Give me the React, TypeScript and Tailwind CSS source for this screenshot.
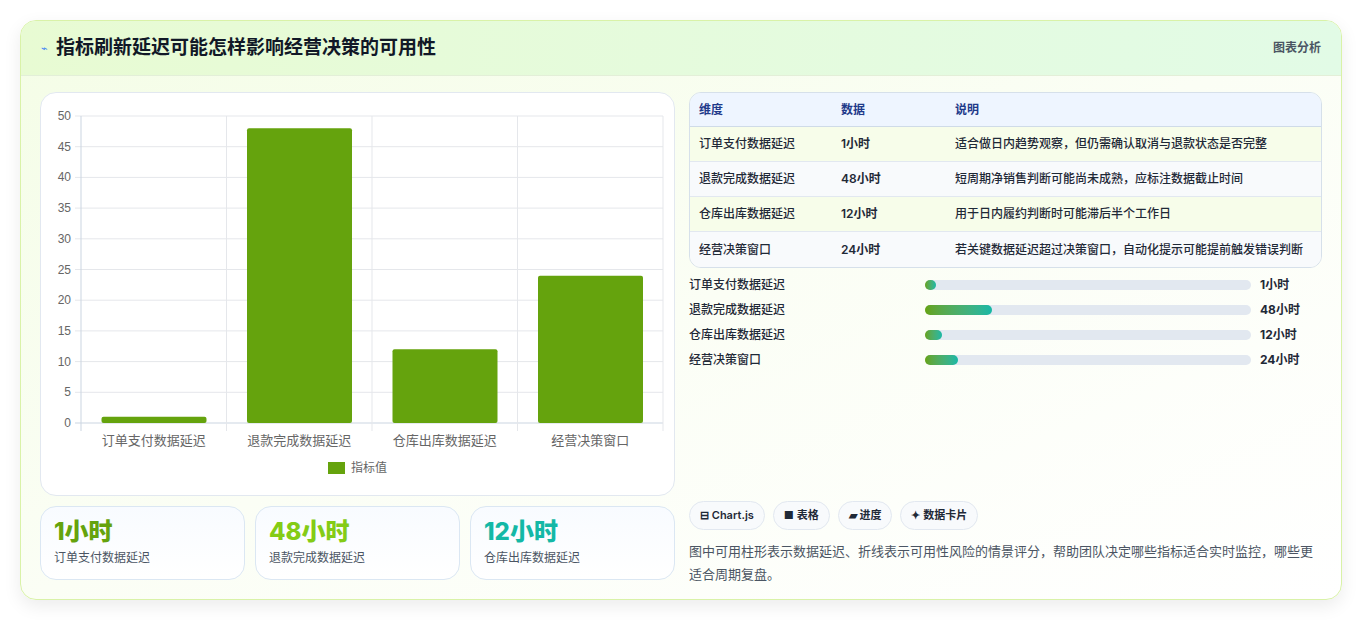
import React from "react";

const cats = ["订单支付数据延迟", "退款完成数据延迟", "仓库出库数据延迟", "经营决策窗口"];
const vals = [1, 48, 12, 24];
const rows = [
  ["订单支付数据延迟", "1小时", "适合做日内趋势观察，但仍需确认取消与退款状态是否完整"],
  ["退款完成数据延迟", "48小时", "短周期净销售判断可能尚未成熟，应标注数据截止时间"],
  ["仓库出库数据延迟", "12小时", "用于日内履约判断时可能滞后半个工作日"],
  ["经营决策窗口", "24小时", "若关键数据延迟超过决策窗口，自动化提示可能提前触发错误判断"],
];

function Chart() {
  const x0 = 40, x1 = 622, yTop = 23, yBot = 330;
  const cw = (x1 - x0) / 4;
  const y = (v: number) => yBot - (v / 50) * (yBot - yTop);
  return (
    <svg width="635" height="404" className="block">
      {[0, 5, 10, 15, 20, 25, 30, 35, 40, 45, 50].map((t) => (
        <g key={t}>
          <line x1={x0 - 6} x2={x1} y1={y(t)} y2={y(t)} stroke={t === 0 ? "#cbd5e1" : "#e5e7eb"} />
          <text x={x0 - 10} y={y(t) + 4} textAnchor="end" fontSize="12" fill="#666" fontFamily="Liberation Sans, sans-serif">{t}</text>
        </g>
      ))}
      {[0, 1, 2, 3, 4].map((i) => (
        <line key={i} x1={x0 + i * cw} x2={x0 + i * cw} y1={yTop} y2={yBot + 8} stroke={i === 0 ? "#cbd5e1" : "#e5e7eb"} />
      ))}
      {vals.map((v, i) => (
        <rect key={i} x={x0 + i * cw + 20.5} y={y(v)} width={105} height={yBot - y(v)} fill="#65a30d" rx="2" />
      ))}
      {cats.map((c, i) => (
        <text key={c} x={x0 + i * cw + cw / 2} y={352} textAnchor="middle" fontSize="13" fill="#666" fontFamily="Noto Sans CJK SC, sans-serif">{c}</text>
      ))}
      <rect x="287" y="369" width="17" height="12" fill="#65a30d" />
      <text x="310" y="379" fontSize="12" fill="#666" fontFamily="Noto Sans CJK SC, sans-serif">指标值</text>
    </svg>
  );
}

export default function App() {
  const font = { fontFamily: "Inter, 'Noto Sans CJK SC', sans-serif" };
  return (
    <div className="w-[1363px] h-[621px] bg-white pt-5 px-5" style={font}>
      <div className="w-[1322px] h-[580px] rounded-2xl border border-[#d9f2a8] shadow-[0_6px_18px_rgba(0,0,0,0.08)] bg-gradient-to-br from-[#f4fde6] via-[#fbfef5] to-white overflow-hidden">
        <div className="h-[55px] flex items-center justify-between px-5 bg-gradient-to-r from-[#e8fbd3] to-[#e2fbe6] border-b border-[#e3efd8]">
          <div className="flex items-center gap-2">
            <span className="text-[11px] text-[#3b82f6]">⌁</span>
            <span className="text-[19px] font-bold text-[#111827]">指标刷新延迟可能怎样影响经营决策的可用性</span>
          </div>
          <span className="text-[12px] text-[#4b5563] font-semibold">图表分析</span>
        </div>
        <div className="flex gap-[14px] px-[19px] pt-[16px]">
          <div className="w-[635px] flex flex-col gap-[10px]">
            <div className="h-[404px] rounded-2xl border border-[#e2e8f0] bg-white">
              <Chart />
            </div>
            <div className="flex gap-[10px]">
              {[
                ["1小时", "订单支付数据延迟", "text-[#65a30d]"],
                ["48小时", "退款完成数据延迟", "text-[#84cc16]"],
                ["12小时", "仓库出库数据延迟", "text-[#14b8a6]"],
              ].map(([v, l, c]) => (
                <div key={l} className="flex-1 h-[74px] rounded-2xl border border-[#dbe7f3] bg-gradient-to-b from-[#f8fbff] to-white px-[13px] pt-[10px]">
                  <div className={`text-[24px] font-extrabold leading-[30px] ${c}`}>{v}</div>
                  <div className="text-[12px] text-[#4b5563] mt-[2px]">{l}</div>
                </div>
              ))}
            </div>
          </div>
          <div className="w-[635px] flex flex-col">
            <div className="rounded-xl border border-[#d6e0ea] overflow-hidden text-[12px]">
              <div className="h-[34px] flex items-center bg-[#eef5ff] border-b border-[#cfdbe8] font-semibold text-[#1e3a8a]">
                <div className="w-[151px] pl-[9px]">维度</div>
                <div className="w-[114px]">数据</div>
                <div className="flex-1">说明</div>
              </div>
              {rows.map((r, i) => (
                <div key={i} className={`h-[35px] flex items-center text-[#1f2937] font-medium ${i % 2 === 0 ? "bg-[#f7fdea]" : "bg-[#f8fafc]"} ${i < 3 ? "border-b border-[#e2e8f0]" : ""}`}>
                  <div className="w-[151px] pl-[9px]">{r[0]}</div>
                  <div className="w-[114px] font-semibold">{r[1]}</div>
                  <div className="flex-1 whitespace-nowrap">{r[2]}</div>
                </div>
              ))}
            </div>
            <div className="flex flex-col gap-[7px] mt-[8px]">
              {rows.map((r, i) => (
                <div key={i} className="h-[18px] flex items-center text-[12px] font-medium text-[#1f2937]">
                  <div className="w-[236px]">{r[0]}</div>
                  <div className="w-[326px] h-[10px] rounded-full bg-[#e2e8f0]">
                    <div className="h-full rounded-full bg-gradient-to-r from-[#65a30d] to-[#14b8a6]" style={{ width: `${Math.max(vals[i] / 48 * 20.5, 3.5)}%` }} />
                  </div>
                  <div className="ml-[9px] font-bold">{r[1]}</div>
                </div>
              ))}
            </div>
            <div className="flex gap-[8px] mt-[132px]">
              {["⊟ Chart.js", "■ 表格", "▰ 进度", "✦ 数据卡片"].map((t) => (
                <span key={t} className="h-[29px] px-[10px] flex items-center rounded-full border border-[#e2e8f0] bg-[#f8fafc] text-[11px] font-semibold text-[#1f2937]">{t}</span>
              ))}
            </div>
            <p className="mt-[10px] text-[13px] leading-[23px] text-[#4b5563]">图中可用柱形表示数据延迟、折线表示可用性风险的情景评分，帮助团队决定哪些指标适合实时监控，哪些更适合周期复盘。</p>
          </div>
        </div>
      </div>
    </div>
  );
}
